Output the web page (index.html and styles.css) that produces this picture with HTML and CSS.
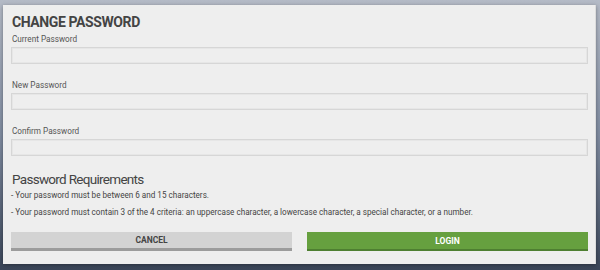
FILE: index.html
```html
<!DOCTYPE html>
<html lang="en">
<head>
  <meta charset="UTF-8" />
  <title>Change Password</title>
  <link rel="stylesheet" href="styles.css">
</head>
<body>
  <div class="dialog">
    <h1 class="dialog-title">CHANGE PASSWORD</h1>

    <div class="field">
      <label class="field-label">Current Password</label>
      <input class="field-input" type="password">
    </div>
    <div class="field">
      <label class="field-label">New Password</label>
      <input class="field-input" type="password">
    </div>
    <div class="field">
      <label class="field-label">Confirm Password</label>
      <input class="field-input" type="password">
    </div>

    <h2 class="req-title">Password Requirements</h2>
    <p class="req-item">- Your password must be between 6 and 15 characters.</p>
    <p class="req-item">- Your password must contain 3 of the 4 criteria: an uppercase character, a lowercase character, a special character, or a number.</p>

    <div class="actions">
      <button class="btn btn-cancel">CANCEL</button>
      <button class="btn btn-login">LOGIN</button>
    </div>
  </div>
</body>
</html>
```

FILE: styles.css
```css
:root {
  --panel-bg: #eeeeee;
  --text-color: #444;
  --label-color: #555;
  --input-border: #d6d6d6;
  --green: #66a03f;
}

* {
  margin: 0;
  padding: 0;
  box-sizing: border-box;
  font-family: Roboto, 'Liberation Sans', sans-serif;
}

body {
  width: 600px;
  height: 270px;
  overflow: hidden;
  background: linear-gradient(180deg, #b4bac6 0%, #7f8ba0 50%, #3b4659 100%);
  padding: 5px 4px 6px 3px;
}

.dialog {
  height: 259px;
  background: var(--panel-bg);
  border-right: 1px solid #dcdcdc;
  box-shadow: 0 1px 4px rgba(0,0,0,0.35);
  padding: 9px 8px 0 8px;
  color: var(--text-color);
}

.dialog-title {
  font-size: 14px;
  line-height: 16px;
  font-weight: bold;
  letter-spacing: -0.4px;
  color: #444;
  padding-left: 1px;
  margin-bottom: 4px;
}

.field {
  display: flex;
  flex-direction: column;
  gap: 2px;
  margin-bottom: 16px;
}

.field-label {
  font-size: 8.2px;
  line-height: 11px;
  color: var(--label-color);
  padding-left: 1px;
}

.field-input {
  height: 17px;
  width: 577px;
  background: var(--panel-bg);
  border: 1px solid var(--input-border);
  box-shadow: inset 0 0 0 1px #e6e6e6;
  outline: none;
}

.req-title {
  font-size: 13.5px;
  line-height: 16px;
  font-weight: normal;
  letter-spacing: -0.7px;
  color: #444;
  padding-left: 1px;
  margin-top: -1px;
  margin-bottom: 3px;
}

.req-item {
  font-size: 8.15px;
  line-height: 10px;
  color: #444;
  margin-bottom: 7px;
}

.actions {
  display: flex;
  gap: 15px;
  margin-top: 15px;
  width: 577px;
}

.btn {
  flex: 1;
  height: 19px;
  border: none;
  font-size: 8.5px;
  font-weight: bold;
  cursor: pointer;
}

.btn-cancel {
  background: #d3d3d3;
  color: #444;
  border-bottom: 3px solid #9c9c9c;
}

.btn-login {
  background: var(--green);
  color: #fff;
  border-bottom: 2px solid #4e7f31;
}
```
